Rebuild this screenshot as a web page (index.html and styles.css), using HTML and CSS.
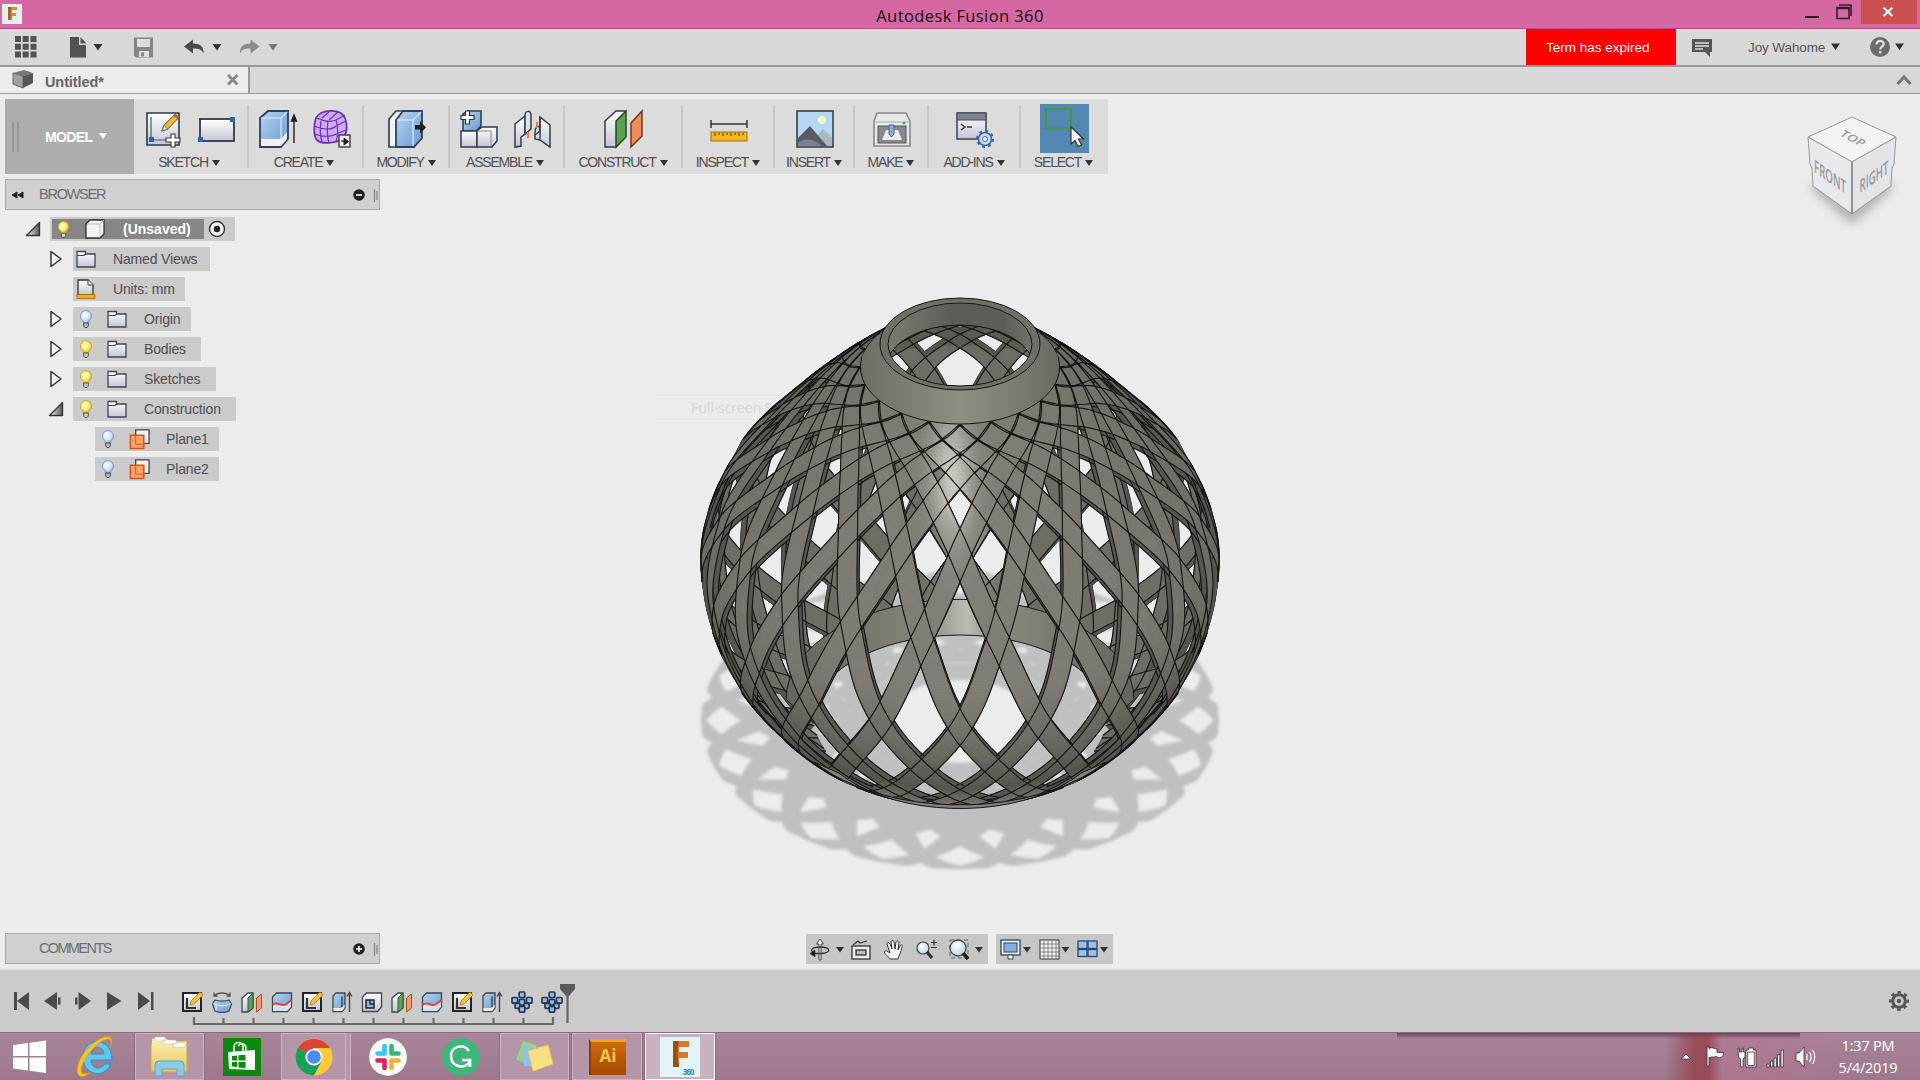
FILE: index.html
```html
<!DOCTYPE html>
<html lang="en">
<head>
<meta charset="utf-8">
<title>Autodesk Fusion 360</title>
<link rel="stylesheet" href="styles.css">
</head>
<body>
<svg class="defs" width="0" height="0">
  <defs>
    <linearGradient id="gBlue" x1="0" y1="0" x2="1" y2="1"><stop offset="0" stop-color="#b4d2f0"/><stop offset="1" stop-color="#6d9bd0"/></linearGradient>
    <linearGradient id="gSilver" x1="0" y1="0" x2="0" y2="1"><stop offset="0" stop-color="#fff"/><stop offset="1" stop-color="#c3c7d2"/></linearGradient>
    <linearGradient id="gTri" x1="0" y1="0" x2="1" y2="0"><stop offset="0" stop-color="#fff"/><stop offset="1" stop-color="#555"/></linearGradient>
    <linearGradient id="gFolder" x1="0" y1="0" x2="0" y2="1"><stop offset="0" stop-color="#fbf1b4"/><stop offset="1" stop-color="#e6c75c"/></linearGradient>
    <radialGradient id="gBulb" cx=".4" cy=".35" r=".7"><stop offset="0" stop-color="#fffde0"/><stop offset=".5" stop-color="#fdf07a"/><stop offset="1" stop-color="#d8b020"/></radialGradient>
    <radialGradient id="gBulbOff" cx=".4" cy=".35" r=".7"><stop offset="0" stop-color="#fff"/><stop offset=".6" stop-color="#cfe0fb"/><stop offset="1" stop-color="#8ba2cc"/></radialGradient>
    <radialGradient id="gLens" cx=".4" cy=".35" r=".7"><stop offset="0" stop-color="#fff"/><stop offset="1" stop-color="#b4d4dc"/></radialGradient>
  </defs>
  <symbol id="bulb" viewBox="0 0 16 20"><path d="M8 1.500a5.600 5.600 0 0 0-3 10.300L5.500 14h5l.5-2.200A5.600 5.600 0 0 0 8 1.500z" fill="url(#gBulb)" stroke="#c8a326"/><path d="M5.700 14h4.600v3l-1.300 1.500H7L5.700 17z" fill="#ccc" stroke="#555"/></symbol>
  <symbol id="bulb-off" viewBox="0 0 16 20"><path d="M8 1.500a5.600 5.600 0 0 0-3 10.300L5.500 14h5l.5-2.200A5.600 5.600 0 0 0 8 1.500z" fill="url(#gBulbOff)" stroke="#8798bb"/><path d="M5.700 14h4.600v3l-1.300 1.500H7L5.700 17z" fill="#bbb" stroke="#444"/></symbol>
  <symbol id="folder" viewBox="0 0 20 18"><path d="M1 1.500h8.500v2.500H19v13H1z" fill="url(#gSilver)" stroke="#3e4652" stroke-width="1.300"/><path d="M1 5.500h7l1.500-1.500" fill="none" stroke="#3e4652" stroke-width="1.200"/></symbol>
  <symbol id="plane" viewBox="0 0 22 22"><path d="M7 1h14v14H7z" fill="#f3f3f3" stroke="#3e4652" stroke-width="1.400"/><path d="M1.500 6.500h14v14h-14z" fill="#fba26a" stroke="#cc5a1c" stroke-width="1.600"/><path d="M7 7v9h8" fill="none" stroke="#cc5a1c"/></symbol>
  <symbol id="closed" viewBox="0 0 14 18"><path d="M2 1.500L12 9 2 16.500z" fill="#f6f6f6" stroke="#333" stroke-width="1.500" stroke-linejoin="round"/></symbol>
  <symbol id="open" viewBox="0 0 16 16"><path d="M14.500 1.500v13H1.500z" fill="url(#gTri)" stroke="#333" stroke-width="1.300" stroke-linejoin="round"/></symbol>
  <symbol id="pencil" viewBox="0 0 20 20"><path d="M1 19l2-6L15 1l4 3.500L7 17z" fill="#f6b92b" stroke="#5b4a26" stroke-width="1"/><path d="M1 19l2-6 4 4z" fill="#fff" stroke="#444" stroke-width=".8"/><path d="M13 3l4 3.500 2-2L15 1z" fill="#b46a3a"/></symbol>
  <symbol id="t-sketch" viewBox="0 0 22 22"><path d="M2 2h18v18H2z" fill="url(#gSilver)" stroke="#222" stroke-width="2"/><path d="M6 7v10h9" fill="none" stroke="#2d3640" stroke-width="2.200"/><path d="M9 14l1-4 9-9 3 3-9 9z" fill="#f7c02d" stroke="#a87817" stroke-width=".8"/></symbol>
  <symbol id="t-revolve" viewBox="0 0 22 22"><path d="M3 5c4-4 12-4 16 0M3 1.500V5h3.500M19 1.500V5h-3.500" fill="none" stroke="#555" stroke-width="1.300"/><path d="M4 9c5 1.500 9 1.500 14 0l2.500 4-2.500 7c-4 1.700-10 1.700-14 0L1.500 13z" fill="url(#gBlue)" stroke="#3b4d68" stroke-width="1.300"/><path d="M2.500 12.500c5 3 12 3 17 0M5 14v5.500" fill="none" stroke="#e8f2fc"/></symbol>
  <symbol id="t-plane" viewBox="0 0 22 22"><path d="M1 7l6-5h5v15l-5 4H1z" fill="url(#gSilver)" stroke="#3e4652" stroke-width="1.300"/><path d="M7 7l5-5v15l-5 4z" fill="#5da05a" stroke="#2f5a30"/><path d="M15.500 7L20.500 3v14l-5 4z" fill="#f39a68" stroke="#a5532a"/></symbol>
  <symbol id="t-split" viewBox="0 0 22 22"><path d="M1.500 6l4-4h15v14l-4 4.500h-15z" fill="url(#gBlue)" stroke="#3e4652" stroke-width="1.300"/><path d="M2 13h15l3-4v7l-4 4H2z" fill="#eef0f4" opacity=".8"/><path d="M1.500 14c5-5 8 3 14-1l5-4" fill="none" stroke="#e1413b" stroke-width="2"/></symbol>
  <symbol id="t-extrude" viewBox="0 0 22 22"><path d="M2 5l3-3h9v15l-3 3.500H2z" fill="url(#gBlue)" stroke="#3e4652" stroke-width="1.300"/><path d="M2.500 17H11l2.500-3.500V17L11 20H2.500z" fill="#eee"/><path d="M11 5.500V16M18.500 3v18M16 5.500L18.500 1.500 21 5.500" fill="none" stroke="#3e4652" stroke-width="1.400"/></symbol>
  <symbol id="t-shell" viewBox="0 0 22 22"><path d="M1.500 6l4-4h15v14l-4 4.500h-15z" fill="url(#gSilver)" stroke="#3e4652" stroke-width="1.300"/><path d="M5 9h8v8H5z" fill="#8db4e0" stroke="#222" stroke-width="1.500"/><path d="M9 9v4h4" fill="none" stroke="#222" stroke-width="1.300"/></symbol>
  <symbol id="t-pattern" viewBox="0 0 22 22"><g fill="#9bb9e2" stroke="#27364f" stroke-width="1.700"><rect x="8.200" y="1" width="5.600" height="5.600" rx="1"/><rect x="8.200" y="8.500" width="5.600" height="5.600" rx="1"/><rect x="1" y="6.500" width="5.600" height="5.600" rx="1"/><rect x="15.500" y="6.500" width="5.600" height="5.600" rx="1"/><rect x="4" y="12.300" width="5" height="5" rx="1"/><rect x="13" y="12.300" width="5" height="5" rx="1"/><rect x="8.200" y="15.500" width="5.600" height="5.600" rx="1"/></g></symbol>
</svg>
<div class="desktop">
  <header class="titlebar">
    <svg class="app-icon" width="20" height="20"><rect width="20" height="20" fill="#dff0f8"/><path d="M6 3h9v3h-5v3h4v3h-4v4H6z" fill="#e08a2a"/><path d="M6 3h3v13H6z" fill="#b45d14"/></svg>
    <h1>Autodesk Fusion 360</h1>
    <svg class="win-buttons" width="114" height="24"><path d="M0 17h14" stroke="#222" stroke-width="2"/><path d="M32 7.500h12v11H32zM32 8.500h12M34 5h12v11" fill="none" stroke="#33202b" stroke-width="1.600"/><rect x="56" width="56" height="24" fill="#c9504f"/><path d="M78.500 7.500l9 8.500M87.500 7.500l-9 8.500" stroke="#fff" stroke-width="2.200"/></svg>
  </header>

  <nav class="quickbar">
    <svg width="500" height="34"><g fill="#525252"><path d="M15 7h6v6h-6zM22.700 7h6v6h-6zM30.500 7h6v6h-6zM15 14.700h6v6h-6zM22.700 14.700h6v6h-6zM30.500 14.700h6v6h-6zM15 22.500h6v6h-6zM22.700 22.500h6v6h-6zM30.500 22.500h6v6h-6z"/><path d="M70 8h9v8h7v12.500H70zM80.500 8l6 6.500h-6z"/></g><path d="M93.500 15h9L98 21.500zM212.500 15h9l-4.500 6.500z" fill="#333"/><path d="M268.500 15h9l-4.500 6.500z" fill="#777"/><path d="M134 8.500h19v20h-17l-2-2z" fill="#858585"/><path d="M137 10h13v8h-13zM139 22h10v6h-10z" fill="#dcdcdc"/><path d="M141 23.500h3v4h-3z" fill="#858585"/><path d="M184 17.500l9-7v4c7 0 11 3 10.500 10-2-4-4-5-10.500-5v5z" fill="#4b4b4b"/><path d="M259.500 17.500l-9-7v4c-7 0-11 3-10.500 10 2-4 4-5 10.500-5v5z" fill="#8b8b8b"/></svg>
    <div class="quick-right">
      <span class="expired">Term has expired</span>
      <svg class="chat" width="22" height="20"><path d="M0 1h20v13h-2v5l-5-5H0z" fill="#555"/><path d="M3 5h14M3 8h14M3 11h8" stroke="#ddd" stroke-width="1.300"/></svg>
      <span class="user">Joy Wahome</span>
      <svg width="96" height="22"><path d="M7 7.500h9L11.500 14zM71 7.500h9L75.500 14z" fill="#333"/><circle cx="56" cy="11" r="10" fill="#6b6b6b"/><path d="M52.500 8.500c0-5 7.500-4.500 7.200-.3-.2 2.300-3.500 2.500-3.500 5.300M56.200 15v2.500" fill="none" stroke="#e2e2e2" stroke-width="2.300"/></svg>
    </div>
  </nav>

  <div class="tabs">
    <div class="tab">
      <svg width="22" height="22"><path d="M1 4l11-3 9 3-10 3z" fill="#777"/><path d="M1 4l10 3v12L1 15z" fill="#a2a2a2" stroke="#666"/><path d="M21 4L11 7v12l10-5z" fill="#555"/></svg>
      <span>Untitled*</span>
      <svg width="14" height="14"><path d="M2 2l9.500 9.500M11.500 2L2 11.500" stroke="#8a8a8a" stroke-width="3"/></svg>
    </div>
    <svg class="collapse" width="16" height="12"><path d="M1.500 10L8 3l6.500 7" fill="none" stroke="#777" stroke-width="3"/></svg>
  </div>

  <main class="workspace">
    <div class="ghost">Full-screen Snip</div>
    <canvas id="model" class="model" width="600" height="620"></canvas>

    <section class="ribbon">
      <div class="mode"><i class="grip"></i><span>MODEL</span><i class="caret light"></i></div>
      <div class="group w115"><div class="icons">
        <svg width="38" height="40"><path d="M3 4h32v32H3z" fill="url(#gSilver)" stroke="#2f3a48" stroke-width="1.600"/><path d="M7 8v23h19" fill="none" stroke="#3d5a86" stroke-width="1.200"/><rect x="5" y="28" width="5" height="5" fill="#2e62b8"/><use href="#pencil" x="17" y="4" width="19" height="19"/><path d="M27 25h4v4h5v4h-5v5h-4v-5h-5v-4h5z" fill="#fff" stroke="#333" stroke-width="1.100"/></svg>
        <svg width="40" height="40"><rect x="4" y="10" width="34" height="22" fill="url(#gSilver)" stroke="#2f3a48" stroke-width="1.800"/><rect x="34" y="8" width="5" height="5" fill="#2e62b8"/><rect x="2" y="28" width="5" height="5" fill="#2e62b8"/></svg>
      </div><b>SKETCH<i class="caret"></i></b></div>
      <div class="group w115"><div class="icons">
        <svg width="40" height="40"><path d="M2 9l8-7h20v28l-7 8H2z" fill="url(#gBlue)" stroke="#2f4058" stroke-width="1.800"/><path d="M3 30h20l6-7v7l-6 7H3z" fill="#eef0f2"/><path d="M3 9h20v21M23 9l6-6" fill="none" stroke="#c9e0f6" stroke-width="1.500"/><path d="M36 9v25M33.500 12L36 6l2.500 6z" stroke="#222" stroke-width="1.400"/></svg>
        <svg width="40" height="40"><path d="M4 9c5-9 25-10 29 0 3 8 2 14-1 19-4 6-22 8-27 3-4-4-3-17-1-22z" fill="#cfa9f8" stroke="#6a35a8" stroke-width="1.800"/><path d="M2 17c9 4 18 4 22 0l10-5M2 25c9 3 18 3 22 0l10-4M9 12c-1 7-1 15 1 21M16 12c-1 7-1 15 1 22M24 11c2 7 2 15 0 22M5 9c8 4 14 4 19 2l9-5M10 9l7-6M17 11l9-8" fill="none" stroke="#6a35a8" stroke-width="1.200"/><rect x="27" y="26" width="11" height="12" fill="#eee" stroke="#444" stroke-width="1.500"/><path d="M29 32h3v-3l4.500 3.500L32 36v-3" fill="#222" stroke="#222"/></svg>
      </div><b>CREATE<i class="caret"></i></b></div>
      <div class="group w86"><div class="icons">
        <svg width="40" height="40"><path d="M2 10l7-8h7v28l-7 8H2z" fill="#f2f3f5" stroke="#2f4058" stroke-width="1.700"/><path d="M9 11l7-9h19v27l-8 9H9z" fill="url(#gBlue)" stroke="#2f4058" stroke-width="1.800"/><path d="M10 11h16v26M26 11l8-8" fill="none" stroke="#c9e0f6" stroke-width="1.400"/><path d="M28 16h5v-4l6 6.500-6 6v-4h-5z" fill="#222"/></svg>
      </div><b>MODIFY<i class="caret"></i></b></div>
      <div class="group w115"><div class="icons">
        <svg width="40" height="40"><path d="M4 5l5-3h13v15l-5 5H4z" fill="url(#gBlue)" stroke="#2f4058" stroke-width="1.600"/><path d="M2 22h16v16H2z" fill="url(#gSilver)" stroke="#2f3a48" stroke-width="1.500"/><path d="M18 22l5-4h15v14l-5 6H18z" fill="url(#gSilver)" stroke="#2f3a48" stroke-width="1.500"/><path d="M18 22h14v15" fill="none" stroke="#888"/><path d="M6.500 2h4v4.500H15v4h-4.500V15h-4v-4.500H2v-4h4.500z" fill="#fff" stroke="#333" stroke-width="1.200"/></svg>
        <svg width="40" height="40"><path d="M2 15l10-8v18l-4 3v9l-6 1z" fill="url(#gSilver)" stroke="#343c48" stroke-width="1.500"/><path d="M12 7c0-6 6-6 6-1v14l-6 5z" fill="#dfe2e8" stroke="#343c48" stroke-width="1.500"/><path d="M37 16L27 8v14l-5 4v4l5 1 10 7z" fill="url(#gSilver)" stroke="#343c48" stroke-width="1.500"/><path d="M27 8v22M22 26c0-6 0-8 5-9" fill="none" stroke="#343c48" stroke-width="1.400"/><path d="M15 23v6M24 13v6" stroke="#ee7a33" stroke-width="2"/></svg>
      </div><b>ASSEMBLE<i class="caret"></i></b></div>
      <div class="group w118"><div class="icons">
        <svg width="42" height="40"><path d="M2 12L13 2h9v26l-9 10H2z" fill="url(#gSilver)" stroke="#2f3a48" stroke-width="1.500"/><path d="M13 12L23 2v26L13 38z" fill="#5aa251" stroke="#234a20" stroke-width="1.500"/><path d="M28 14L39 2v25L28 38z" fill="#f08b57" stroke="#6a3c22" stroke-width="1.500"/></svg>
      </div><b>CONSTRUCT<i class="caret"></i></b></div>
      <div class="group w92"><div class="icons">
        <svg width="40" height="40"><path d="M2 15h36M2 11v8M38 11v8" stroke="#333" stroke-width="1.500"/><rect x="2" y="23" width="36" height="9" fill="#f6b61c" stroke="#9a6f12"/><path d="M6 24v3M10 24v2M14 24v3M18 24v2M22 24v3M26 24v2M30 24v3M34 24v2" stroke="#6a4a0a" stroke-width="1.200"/></svg>
      </div><b>INSPECT<i class="caret"></i></b></div>
      <div class="group w80"><div class="icons">
        <svg width="40" height="40"><rect x="2" y="2" width="36" height="36" fill="#b5d9f4" stroke="#333" stroke-width="1.500"/><circle cx="27" cy="11" r="4" fill="#fbf6c2"/><path d="M18 31l10-11c5 4 7 6 9 9v8H18z" fill="#aeb6c0"/><path d="M3 29l12-12 17 20H3z" fill="#565a66"/><path d="M3 34c9-6 16-4 24 3H3z" fill="#7c8190"/></svg>
      </div><b>INSERT<i class="caret"></i></b></div>
      <div class="group w74"><div class="icons">
        <svg width="40" height="40"><path d="M5 4h29l4 8v25H2V12z" fill="#e8e9eb" stroke="#888" stroke-width="1.600"/><path d="M2 13h36" stroke="#aaa"/><rect x="6" y="17" width="28" height="17" fill="#85888d" stroke="#555"/><path d="M10 31l4-10h12l4 10z" fill="#e9eaec"/><path d="M17 16h5v9l-2.500 3-2.500-3z" fill="#8cabd4" stroke="#567"/><circle cx="32" cy="14" r="1.500" fill="#4caf50"/></svg>
      </div><b>MAKE<i class="caret"></i></b></div>
      <div class="group w92"><div class="icons">
        <svg width="42" height="40"><rect x="3" y="4" width="29" height="26" fill="url(#gSilver)" stroke="#444c58" stroke-width="1.600"/><path d="M3 4h29v7H3z" fill="#7d8490" stroke="#444c58"/><path d="M7 15l4 3-4 3M13 18h5" fill="none" stroke="#333" stroke-width="1.500"/><circle cx="31" cy="30" r="6.500" fill="#c8daf4" stroke="#41649c" stroke-width="1.600"/><circle cx="31" cy="30" r="8" fill="none" stroke="#41649c" stroke-width="2" stroke-dasharray="3 3.280"/><circle cx="31" cy="30" r="2.500" fill="#fff" stroke="#41649c"/></svg>
      </div><b>ADD-INS<i class="caret"></i></b></div>
      <div class="group w87"><div class="icons">
        <svg width="49" height="49"><rect width="49" height="49" fill="#5488b3"/><rect x="6" y="5" width="25" height="19" fill="none" stroke="#3d9c3f" stroke-width="2"/><path d="M31 23v17l4-3.500 3 6 3.500-1.800-3-5.700h5z" fill="#fff" stroke="#333" stroke-width="1.200"/></svg>
      </div><b>SELECT<i class="caret"></i></b></div>
    </section>

    <section class="panel">
      <svg width="15" height="10"><path d="M6 2v6L1 5zM12 2v6L7 5z" fill="#222" stroke="#222"/></svg>
      <h2>BROWSER</h2>
      <svg width="26" height="14"><circle cx="7" cy="7" r="5.800" fill="#222"/><path d="M4 7h6" stroke="#fff" stroke-width="1.600"/><path d="M22.500 1v13M25 3v9" stroke="#888" stroke-width="1.300"/></svg>
    </section>

    <ul class="tree">
      <li class="l0"><svg class="tw" width="16" height="16"><use href="#open"/></svg><div class="chip root"><div class="sel"><svg width="15" height="19"><use href="#bulb"/></svg><svg class="cube" width="22" height="20"><path d="M2 5l4-4h14v14l-4 4H2z" fill="#f3f3f5" stroke="#333" stroke-width="1.300"/><path d="M3 5h13v13M16 5l4-4" fill="none" stroke="#bbb"/></svg><span>(Unsaved)</span></div><svg width="18" height="18"><circle cx="9" cy="9" r="7.500" fill="#f4f4f4" stroke="#333" stroke-width="1.400"/><circle cx="9" cy="9" r="3.200" fill="#222"/></svg></div></li>
      <li class="l1"><svg class="tw" width="14" height="18"><use href="#closed"/></svg><div class="chip nv"><svg width="20" height="18"><use href="#folder"/></svg><span>Named Views</span></div></li>
      <li class="l1"><i class="tw"></i><div class="chip un"><svg width="20" height="20"><path d="M2 1h10l5 5v10H2z" fill="url(#gSilver)" stroke="#333" stroke-width="1.300"/><path d="M12 1v5h5" fill="#fff" stroke="#333"/><rect x="1" y="15.500" width="18" height="4" fill="#f3a91a" stroke="#a46c0a" stroke-width=".8"/></svg><span>Units: mm</span></div></li>
      <li class="l1"><svg class="tw" width="14" height="18"><use href="#closed"/></svg><div class="chip w118"><svg width="16" height="20"><use href="#bulb-off"/></svg><svg width="20" height="18"><use href="#folder"/></svg><span>Origin</span></div></li>
      <li class="l1"><svg class="tw" width="14" height="18"><use href="#closed"/></svg><div class="chip w128"><svg width="16" height="20"><use href="#bulb"/></svg><svg width="20" height="18"><use href="#folder"/></svg><span>Bodies</span></div></li>
      <li class="l1"><svg class="tw" width="14" height="18"><use href="#closed"/></svg><div class="chip w143"><svg width="16" height="20"><use href="#bulb"/></svg><svg width="20" height="18"><use href="#folder"/></svg><span>Sketches</span></div></li>
      <li class="l1"><svg class="tw" width="16" height="16"><use href="#open"/></svg><div class="chip w163"><svg width="16" height="20"><use href="#bulb"/></svg><svg width="20" height="18"><use href="#folder"/></svg><span>Construction</span></div></li>
      <li class="l2"><div class="chip w124"><svg width="16" height="20"><use href="#bulb-off"/></svg><svg width="21" height="21"><use href="#plane"/></svg><span>Plane1</span></div></li>
      <li class="l2"><div class="chip w124"><svg width="16" height="20"><use href="#bulb-off"/></svg><svg width="21" height="21"><use href="#plane"/></svg><span>Plane2</span></div></li>
    </ul>

    <svg class="viewcube" width="120" height="130">
      <defs><filter id="soft" x="-30%" y="-60%" width="160%" height="220%"><feGaussianBlur stdDeviation="5"/></filter></defs>
      <path d="M18 88l42 36 42-36-10-10H28z" fill="#999" opacity=".65" filter="url(#soft)"/>
      <path d="M60 16l44 20-44 25-44-25z" fill="#f3f3f5" stroke="#999"/>
      <path d="M16 36l44 25v52L21 85l-1-18-2-4z" fill="#e8e9ec" stroke="#999"/>
      <path d="M104 36L60 61v52l39-28 1-18 2-4z" fill="#e3e4e8" stroke="#999"/>
      <path d="M60 61v52" stroke="#888" stroke-width="1.500"/>
      <g font-family="Open Sans, sans-serif" font-weight="600" fill="#98989c" text-anchor="middle">
        <text transform="matrix(.76 .4 -.55 .5 58 40)" font-size="15">TOP</text>
        <text transform="matrix(.57 .4 0 1.050 38 82)" font-size="17">FRONT</text>
        <text transform="matrix(.57 -.4 0 1.050 82 82)" font-size="17">RIGHT</text>
      </g>
    </svg>

    <div class="bottom">
      <section class="panel comments">
        <h2>COMMENTS</h2>
        <svg width="26" height="14"><circle cx="7" cy="7" r="5.800" fill="#222"/><path d="M4 7h6M7 4v6" stroke="#fff" stroke-width="1.600"/><path d="M22.500 1v13M25 3v9" stroke="#888" stroke-width="1.300"/></svg>
      </section>
      <svg class="navbar" width="182" height="30">
        <g fill="none" stroke="#333" stroke-width="1.300"><path d="M13 26V10h-2.500L14 5l3.500 5H15v16z" fill="#fff" stroke-width=".9"/><path d="M9 19c-6-2-4-6 5-6 11 0 12 6 1 6.500H8"/><path d="M9 16v7l-5-3.500z" fill="#222" stroke-width=".6"/></g>
        <path d="M30 13h8l-4 5.500zM169 13h8l-4 5.500z" fill="#333"/>
        <g fill="#eee" stroke="#333" stroke-width="1.300"><rect x="46" y="12" width="18" height="13"/><rect x="50" y="16" width="10" height="5" fill="#bbb"/><path d="M47 11l5-4 2 2 7-2" fill="none"/></g>
        <path d="M84 25c-3-4-7-6-5-8 2-1 4 2 5 2l-3-9c0-2 2-2 3 0l2 5-1-7c0-2 3-2 3 0l1 7 1-7c1-2 3-1 3 0l-1 8 2-4c1-2 3-1 2 1-1 5-3 8-4 12z" fill="#fff" stroke="#333" stroke-width="1"/>
        <circle cx="117" cy="14" r="6" fill="url(#gLens)" stroke="#444" stroke-width="1.200"/><path d="M121 18l5 6" stroke="#333" stroke-width="3.300"/><path d="M125 8.500h6M128 5.500v6M125 13.500h6" stroke="#333" stroke-width="1.200"/>
        <rect x="144" y="6" width="18" height="18" fill="none" stroke="#666" stroke-dasharray="4 3"/><circle cx="152" cy="14" r="8" fill="url(#gLens)" stroke="#444" stroke-width="1.300"/><path d="M157 19l5 6" stroke="#222" stroke-width="3.800"/>
      </svg>
      <svg class="navbar second" width="117" height="30">
        <rect x="5" y="6" width="19" height="15" fill="#eee" stroke="#345" stroke-width="1.300"/><rect x="8" y="9" width="13" height="9" fill="#85aee0" stroke="#345"/><path d="M12 21h5v4h-5z" fill="#fff" stroke="#345"/><path d="M27 13h8l-4 5.500zM65.500 13h8l-4 5.500zM104 13h8l-4 5.500z" fill="#333"/>
        <rect x="44" y="6" width="19" height="19" fill="#f3f3f3" stroke="#333"/><path d="M48 6v19M52 6v19M56 6v19M60 6v19M44 10h19M44 14h19M44 18h19M44 22h19" stroke="#777" stroke-width=".9" fill="none"/>
        <g fill="#9dc0ec" stroke="#2c456c" stroke-width="1.300"><rect x="82" y="7" width="9" height="7.500"/><rect x="92" y="7" width="9" height="7.500"/><rect x="82" y="15.500" width="9" height="7"/><rect x="92" y="15.500" width="9" height="7"/></g>
      </svg>
    </div>
  </main>

  <section class="timeline">
    <svg class="playback" width="150" height="20"><g fill="#4a4a4a"><path d="M1 1h3v18H1zM16 1v18L4 10zM44 1v18L31 10zM45 6.500h2.500v7H45zM62 6.500h2.500v7H62zM65.500 1v18L78 10zM94 1v18l14.500-9zM125 1v18l12-9zM138 1h2.500v18H138z"/></g></svg>
    <div class="track">
      <div class="features">
        <svg><use href="#t-sketch"/></svg><svg><use href="#t-revolve"/></svg><svg><use href="#t-plane"/></svg><svg><use href="#t-split"/></svg><svg><use href="#t-sketch"/></svg><svg><use href="#t-extrude"/></svg><svg><use href="#t-shell"/></svg><svg><use href="#t-plane"/></svg><svg><use href="#t-split"/></svg><svg><use href="#t-sketch"/></svg><svg><use href="#t-extrude"/></svg><svg><use href="#t-pattern"/></svg><svg><use href="#t-pattern"/></svg>
      </div>
      <svg class="rail" width="364" height="9"><path d="M2 0v7h359V0M31.500 7V1M61.500 7V1M91.500 7V1M121.500 7V1M151.500 7V1M181.500 7V1M211.500 7V1M241.500 7V1M271.500 7V1M301.500 7V1M331.500 7V1" fill="none" stroke="#6a6a6a" stroke-width="2.200"/></svg>
      <svg class="marker" width="16" height="41"><path d="M0 1h15v5l-6 7h-3L0 6z" fill="#5a5a5a"/><path d="M7.500 10v30" stroke="#666" stroke-width="2.200"/></svg>
    </div>
    <svg class="gear" width="22" height="22"><circle cx="11" cy="11" r="6.300" fill="none" stroke="#555" stroke-width="3"/><circle cx="11" cy="11" r="8.700" fill="none" stroke="#555" stroke-width="2.600" stroke-dasharray="3.400 3.430" stroke-dashoffset="1.700"/><circle cx="11" cy="11" r="2.200" fill="#555"/></svg>
  </section>

  <footer class="taskbar">
    <div class="task start"><svg width="34" height="34"><path d="M0 5l15-2v13H0zM16.500 2.800L33 .5V16H16.500zM0 17.500h15v13l-15-2zM16.500 17.500H33V33l-16.500-2.300z" fill="#fff"/></svg></div>
    <div class="task ie"><svg width="40" height="44"><path d="M35 29c-6 15-28 12-28-7C7 2 36 0 36 25H15c1 10 11 10 13 4zM15 19h13c-1-9-12-9-13 0z" fill="#5bc8f0" stroke="#2d93cc" fill-rule="evenodd"/><path d="M34 13C39 2 33-1 24 4 10 11-2 30 2 39c2 5 8 2 13-2-6 3-10 2-10-2C6 24 22 5 32 4c4 0 3 5 2 9z" fill="#fbc41c" stroke="#d9960d" stroke-width=".6"/></svg></div>
    <div class="task framed explorer"><svg width="42" height="42"><path d="M3 2h14l3 3h18v31H2V10z" fill="url(#gFolder)" stroke="#c9a84a"/><path d="M6 1h10v4H6zM14 4h13v4H14zM24 7h12v4H24z" fill="#fff" stroke="#bbb" stroke-width=".5"/><path d="M6 40V29q0-4 4-4h21q4 0 4 4v11h-7v-7H13v7z" fill="#8ccbe8" stroke="#5aa8d0"/></svg></div>
    <div class="task store"><svg width="38" height="38"><rect width="38" height="38" fill="#0b8a0b"/><path d="M5 14l27-2v20L6 31z" fill="#fff"/><path d="M11 16V9c0-6 9-6 9 0v6M15 8c3-4 8-2 8 2v4" fill="none" stroke="#fff" stroke-width="1.500"/><path d="M9 18l5-.5v5H9zM15.500 17.300l7-.5v5.700h-7zM9 24h5v5l-5-.500zM15.500 24h7v6l-7-.600z" fill="#0b8a0b"/></svg></div>
    <div class="task framed chrome"><svg width="38" height="38"><circle cx="19" cy="19" r="18.500" fill="#fdc93a"/><path d="M19 19L3 10A18.500 18.500 0 0 1 35 10H19z" fill="#dc4437"/><path d="M19 19L3 9.800A18.500 18.500 0 0 0 19 37.500L27 23z" fill="#1a9f58"/><path d="M35 10a18.500 18.500 0 0 1-16 27.500L27 23l-2-13z" fill="#fdc93a"/><circle cx="19" cy="19" r="8.600" fill="#fff"/><circle cx="19" cy="19" r="6.800" fill="#4a8af4"/></svg></div>
    <div class="task slack"><svg width="38" height="38"><circle cx="19" cy="19" r="18.800" fill="#fff"/><g stroke-width="4.600" stroke-linecap="round"><path d="M15.500 8v7M8.500 15.500h7" stroke="#36c5f0"/><path d="M22.500 8v7M22.500 15.500h7" stroke="#2eb67d"/><path d="M15.500 23v7M8.500 22.500h7" stroke="#e01e5a"/><path d="M22.500 23v7M22.500 22.500h7" stroke="#ecb22e"/></g></svg></div>
    <div class="task gram"><svg width="38" height="38"><circle cx="19" cy="19" r="18.800" fill="#3bb877"/><path d="M27 13c-6-9-19-4-18 6 1 12 18 12 19 3h-8M28 21v8" fill="none" stroke="#fff" stroke-width="2.600"/></svg></div>
    <div class="task framed notes"><svg width="38" height="36"><path d="M8 2l14 4-7 19-14-4z" fill="#8fd68a"/><path d="M9 8h16v19H9z" fill="#8fc0f2"/><path d="M13 12l20-6 5 19-20 7z" fill="#fbe083" stroke="#e9c958"/></svg></div>
    <div class="task framed ai"><div class="ai-tile">Ai</div></div>
    <div class="task framed active fusion"><svg width="40" height="40"><rect width="40" height="40" fill="#e2f3fa"/><path d="M13 4h16v6H19v5h9v6h-9v9h-6z" fill="#d5792c"/><path d="M13 4h6c-2 8-2 17 0 26h-6z" fill="#9c4d12"/><text x="22.500" y="37.500" font-family="Liberation Sans" font-size="8.500" font-weight="bold" fill="#1a8bd0" textLength="12">360</text></svg></div>
    <div class="tray">
      <svg width="150" height="26"><g fill="#fff" stroke="#3a2a33" stroke-width=".8"><path d="M1 15l5-5 5 5z"/><path d="M27 3h2v1.500c4-2 5 1 8 0v4h7c-1 6-5 6-8 4-2 1-4 0-7 1V22h-2z"/><path d="M66 6h2.500V4h5v2H76v17H66z"/><path d="M58 4h1.500v4H62V4h1.500v4H65v5l-2 2v8h-2.500v-8l-2-2z"/><path d="M87 20h2.300v3H87zM90.500 17h2.300v6h-2.300zM94 14h2.300v9H94zM97.500 10.500h2.300V23h-2.300zM101 6h2.300v17H101z"/><path d="M116 9h3l5-6v20l-5-6h-3z"/></g><path d="M67.700 8h6.600v13.500h-6.600z" fill="none" stroke="#3a2a33" stroke-width=".8"/><path d="M127 10v6M129.500 8c2 3 2 7 0 10M132.500 6c3 4 3 10 0 14" fill="none" stroke="#fff" stroke-width="1.200"/></svg>
      <div class="clock"><span>1:37 PM</span><span>5/4/2019</span></div>
    </div>
  </footer>
</div>
<script src="model.js"></script>
</body>
</html>
```
FILE: styles.css
```css
* { box-sizing: border-box; }
body { margin: 0; width: 1920px; height: 1080px; overflow: hidden; font-family: "Liberation Sans", Arial, sans-serif; font-size: 14px; color: #555; }
svg { display: block; flex: none; }
h1, h2, ul { margin: 0; padding: 0; font-weight: normal; }
.defs { position: absolute; }
.desktop { display: flex; flex-direction: column; height: 1080px; background: #ececec; }

.titlebar { display: grid; grid-template-columns: 1fr auto 1fr; align-items: start; height: 29px; background: #d568a3; border-bottom: 1px solid #b3508a; }
.app-icon { margin: 4px 0 0 2px; }
.titlebar h1 { font: 16.500px/32px "Open Sans", "Noto Sans", sans-serif; height: 28px; color: #1c1016; letter-spacing: .4px; }
.win-buttons { justify-self: end; margin-right: 1px; }

.quickbar { display: flex; justify-content: space-between; height: 36px; background: #d8d8d8; }
.quick-right { display: flex; align-items: center; width: 394px; height: 36px; }
.expired { display: flex; align-items: center; width: 150px; height: 36px; padding-left: 20px; background: #f00; color: #fff; font-size: 13.500px; }
.chat { margin: 2px 34px 0 16px; }
.user { width: 76px; font-size: 13.500px; letter-spacing: -.1px; white-space: nowrap; }

.tabs { display: flex; justify-content: space-between; align-items: center; height: 29px; background: #d8d8d8; border-top: 2px solid #999; border-bottom: 1px solid #999; padding-right: 8px; }
.tab { display: flex; align-items: center; width: 250px; height: 26px; padding: 0 8px 0 12px; background: #ececec; border-right: 2px solid #999; }
.tab span { flex: 1; padding: 4px 0 0 11px; font-weight: bold; font-size: 14.500px; letter-spacing: -.1px; color: #666; }

.workspace { position: relative; display: flex; flex-direction: column; align-items: flex-start; height: 876px; padding: 5px 5px 0; border-bottom: 1px solid #ddd; }
.model { position: absolute; left: 660px; top: 176px; }
.ghost { position: absolute; left: 657px; top: 301px; width: 150px; height: 25px; padding-left: 34px; border: 1px solid #e4e4e6; border-left: 0; font: 14.500px/24px "Open Sans", sans-serif; letter-spacing: -.3px; color: #d6d6d8; }
.viewcube { position: absolute; left: 1792px; top: 7px; }

.ribbon { display: flex; height: 75px; background: #dcdcdc; margin-bottom: 5px; }
.mode { display: flex; align-items: center; width: 129px; padding: 1px 0 0 7px; background: #adadad; color: #fff; font-weight: bold; font-size: 14px; letter-spacing: -.6px; }
.grip { width: 7px; height: 30px; border: solid #969696; border-width: 0 2px; margin-right: 26px; }
.caret { display: inline-block; border: solid transparent; border-width: 6px 4px 0; border-top-color: #333; margin-left: 4px; }
.caret.light { border-top-color: #fff; margin: -2px 0 0 6px; }
.group { position: relative; display: flex; flex-direction: column; align-items: center; }
.group + .group::before { content: ""; position: absolute; left: -2px; top: 6px; width: 2px; height: 63px; background: #c8c8c8; }
.icons { display: flex; justify-content: center; align-items: center; gap: 14px; height: 49px; margin-top: 5px; }
.group b { display: flex; align-items: center; margin-left: -2px; font-weight: normal; font-size: 14px; line-height: 19px; letter-spacing: -1.200px; color: #505050; }
.w115 { width: 115px; } .w86 { width: 86px; } .w118 { width: 118px; } .w92 { width: 92px; }
.w80 { width: 80px; } .w74 { width: 74px; } .w87 { width: 87px; }
.group.w115 { padding-right: 3px; }

.panel { display: flex; align-items: center; width: 375px; height: 31px; padding: 0 1px 0 5px; background: #d0d0d0; border: 1px solid #aaa; }
.panel h2 { flex: 1; margin: -2px 0 0 13px; font-size: 14.500px; letter-spacing: -1.250px; color: #6e6e6e; }
.panel.comments h2 { margin: -1px 0 0 28px; letter-spacing: -1.600px; }

.tree { list-style: none; margin-top: 7px; }
.tree li { display: flex; align-items: center; height: 24px; margin-bottom: 6px; }
.tw { width: 16px; margin-right: 9px; }
.l0 { padding-left: 20px; }
.l1 { padding-left: 43px; }
.l2 { padding-left: 90px; }
.chip { display: flex; align-items: center; height: 24px; padding-left: 3px; background: #cbcbcb; }
.chip span { letter-spacing: -.15px; font-size: 14px; white-space: nowrap; color: #4e4e4e; margin-left: 17px; }
.chip svg + svg { margin-left: 13px; }
.chip.nv { width: 137px; } .chip.un { width: 112px; }
.chip.w118, .chip.w128, .chip.w143, .chip.w163 { padding-left: 5px; }
.w118 { width: 118px; } .w128 { width: 128px; } .w143 { width: 143px; } .w163 { width: 163px; }
.chip.w124 { padding-left: 5px; width: 124px; }
.w124 span { margin-left: 16px; }
.chip.root { width: 185px; padding-left: 2px; }
.sel { display: flex; align-items: center; width: 152px; height: 20px; padding-left: 4px; background: #868686; margin-right: 4px; }
.chip .sel span { color: #fff; font-weight: bold; margin-left: 17px; letter-spacing: 0; }
.group.w118 { width: 118px; }

.bottom { display: flex; align-items: flex-start; height: 35px; margin-top: auto; }
.panel.comments { margin-top: -1px; }
.navbar { background: #c6c6c6; margin-left: 426px; }
.navbar.second { margin-left: 8px; }

.timeline { display: flex; height: 62px; background: #cbcbcb; padding: 0 10px 0 13px; }
.playback { margin-top: 21px; }
.track { position: relative; width: 420px; margin-left: 18px; padding-top: 21px; }
.features { display: flex; gap: 8px; }
.features svg { width: 22px; height: 22px; }
.rail { margin: 4px 0 0 11px; }
.marker { position: absolute; left: 379px; top: 13px; }
.gear { margin: 20px 0 0 auto; }

.taskbar { display: flex; align-items: stretch; height: 48px; border-top: 1px solid #8a6a7d; background:
  linear-gradient(#6d4358, #6d435800) 1397px 0 / 403px 6px no-repeat,
  linear-gradient(90deg, #96404c00 1665px, #96404cd0 1695px, #96404cd0 1708px, #b5759090 1722px, #b5759070 1790px, #b5759000 1850px),
  linear-gradient(#a9859a, #9c788c); }
.task { display: flex; align-items: center; justify-content: center; }
.framed { border: 1px solid #cdb3c2; background: #b596a8; box-shadow: 0 0 0 1px #8d6a7e; }
.active { border: 1px solid #fff; background: #c9b2bf; }
.start { width: 60px; }
.ie { width: 75px; padding-right: 3px; }
.explorer { width: 69px; }
.store { width: 77px; padding-right: 1px; }
.chrome { width: 65px; box-shadow: 4px 0 0 #b596a8, 5px 0 0 #cdb3c2; }
.slack { width: 84px; }
.gram { width: 62px; margin-right: 8px; }
.notes { width: 69px; padding-right: 2px; }
.ai { width: 70px; margin: 0 3px; }
.fusion { width: 70px; }
.ai-tile { width: 37px; height: 36px; background: linear-gradient(#cc6a0c, #a34a04); border-top: 3px solid #f7a21f; border-left: 2px solid #8a3b04; color: #fdc63f; font: bold 17px/28px "Open Sans", sans-serif; text-align: center; }
.tray { display: flex; align-items: center; margin-left: auto; width: 240px; }
.clock { flex: 1; display: flex; flex-direction: column; margin-right: 14px; text-align: center; font: 14.500px/22px "Open Sans", "Noto Sans", sans-serif; letter-spacing: -.2px; color: #fff; }
```
FILE: model.js
```js
// Draws the woven lamp shade: two opposed families of ribbons on a surface of revolution.
const ctx = document.getElementById('model').getContext('2d');
const CX = 300, CY = 293, SIN = 0.575, COS = 0.82, WIDTH = 21.6, COUNT = 20, STRIPS = 6, THICK = 6;
const RAD = Math.PI / 180;

// Monotone cubic interpolation through [x, y] knots.
function curve(pts) {
  const n = pts.length, d = [], m = [];
  for (let i = 0; i < n - 1; i++) d.push((pts[i + 1][1] - pts[i][1]) / (pts[i + 1][0] - pts[i][0]));
  for (let i = 0; i < n; i++) {
    if (i === 0) m.push(d[0]);
    else if (i === n - 1) m.push(d[n - 2]);
    else m.push(d[i - 1] * d[i] <= 0 ? 0 : 2 * d[i - 1] * d[i] / (d[i - 1] + d[i]));
  }
  return x => {
    let i = 0;
    while (i < n - 2 && x > pts[i + 1][0]) i++;
    const w = pts[i + 1][0] - pts[i][0], t = (x - pts[i][0]) / w, u = 1 - t;
    return pts[i][1] * (1 + 2 * t) * u * u + m[i] * w * t * u * u +
      pts[i + 1][1] * t * t * (3 - 2 * t) - m[i + 1] * w * t * t * u;
  };
}
const radius = curve([[-193, 150], [-170, 180], [-139, 207], [-88, 239], [-30, 256], [5, 259], [75, 241], [144, 191], [183, 157], [205, 136], [228, 112], [239, 100]]);
const twist = curve([[-193, -35], [-170, -27], [-139, -18], [-88, -9], [-22, 0], [75, 9], [144, 18], [183, 27], [205, 36], [218, 45], [228, 54], [239, 63]]);

const STEPS = 150, rows = [];
for (let i = 0; i <= STEPS; i++) {
  const h = -193 + 432 * i / STEPS, e = 4;
  const lo = Math.max(-193, h - e), hi = Math.min(239, h + e);
  const dr = (radius(hi) - radius(lo)) / (hi - lo);
  const df = (twist(hi) - twist(lo)) / (hi - lo) * RAD;
  const r = radius(h), across = r * df / Math.hypot(1, dr);
  rows.push({ h, r, dr, f: twist(h) * RAD, half: WIDTH / 2 / r * Math.hypot(1, across) });
}

function point(row, a, inset) {
  const k = Math.hypot(1, row.dr), r = row.r - inset / k, h = row.h + inset * row.dr / k;
  return { x: CX + r * Math.sin(a), y: CY - h * COS + r * Math.cos(a) * SIN };
}
function facing(row, a) {
  return (-row.dr * SIN + Math.cos(a) * COS) / Math.hypot(1, row.dr);
}
function tone(row, a, front, p) {
  let v;
  if (front) {
    v = 104 + 24 * Math.max(0, facing(row, a));
    if (row.h < 10) v -= Math.min(26, (10 - row.h) * 0.2);
    if (row.h < -120) v += (-120 - row.h) * 0.8;
    v += 74 * Math.exp(-((p.x - 293) ** 2) / 400 - ((p.y - 210) ** 2) / 3600);
  } else {
    v = row.h > 130 ? 92 : 110;
    v += 60 * Math.exp(-((p.x - 303) ** 2) / 500) * (row.h < 0 ? 1 : 0);
  }
  return `rgb(${v + 1 | 0},${v - 1 | 0},${v - 8 | 0})`;
}
function quad(a, b, c, d) {
  ctx.beginPath();
  ctx.moveTo(a.x, a.y); ctx.lineTo(b.x, b.y); ctx.lineTo(c.x, c.y); ctx.lineTo(d.x, d.y);
  ctx.closePath();
}

const ribbons = [];
for (const dir of [1, -1]) for (let k = 0; k < COUNT; k++) ribbons.push({ dir, base: k * 2 * Math.PI / COUNT });

// Calls draw for every ribbon piece; s is the position across the ribbon, -1 to 1.
function pieces(front, stops, draw) {
  for (const rb of ribbons) for (let i = 0; i < STEPS; i++) {
    const p = rows[i], q = rows[i + 1];
    const a = rb.base + rb.dir * p.f, b = rb.base + rb.dir * q.f;
    for (const s of stops) if ((facing(p, a + s * p.half) > 0) === front) draw(p, q, a, b, s);
  }
}
const centres = Array.from({ length: STRIPS }, (_, i) => -1 + (2 * i + 1) / STRIPS);

function outline(front, inset) {
  ctx.strokeStyle = '#151412'; ctx.lineWidth = 1.15;
  ctx.beginPath();
  pieces(front, [-1, 1], (p, q, a, b, s) => {
    const u = point(p, a + s * p.half, inset), v = point(q, b + s * q.half, inset);
    ctx.moveTo(u.x, u.y); ctx.lineTo(v.x, v.y);
  });
  ctx.stroke();
}
function skin(front, inset) {
  const w = 1 / STRIPS;
  pieces(front, centres, (p, q, a, b, s) => {
    const m = point(p, a + s * p.half, inset);
    quad(point(p, a + (s - w) * p.half, inset), point(q, b + (s - w) * q.half, inset),
      point(q, b + (s + w) * q.half, inset), point(p, a + (s + w) * p.half, inset));
    ctx.fillStyle = ctx.strokeStyle = tone(p, a, front, m);
    ctx.lineWidth = 0.7; ctx.fill(); ctx.stroke();
  });
  outline(front, inset);
}
function walls(front) {
  pieces(front, [-1, 1], (p, q, a, b, s) => {
    quad(point(p, a + s * p.half, 0), point(q, b + s * q.half, 0),
      point(q, b + s * q.half, THICK), point(p, a + s * p.half, THICK));
    ctx.fillStyle = ctx.strokeStyle = '#56554f'; ctx.lineWidth = 0.5; ctx.fill(); ctx.stroke();
  });
}
// Limb of the surface, drawn only where a ribbon reaches it.
function limb() {
  ctx.strokeStyle = '#151412'; ctx.lineWidth = 1.6;
  ctx.beginPath();
  for (let i = 0; i < STEPS; i++) {
    const p = rows[i], q = rows[i + 1];
    const cp = p.dr * SIN / COS, cq = q.dr * SIN / COS;
    if (Math.abs(cp) > 1 || Math.abs(cq) > 1) continue;
    for (const side of [1, -1]) {
      const a = side * Math.acos(cp), b = side * Math.acos(cq);
      const covered = ribbons.some(rb => {
        const t = a - rb.base - rb.dir * p.f;
        return Math.abs(Math.atan2(Math.sin(t), Math.cos(t))) < p.half;
      });
      if (!covered) continue;
      const u = point(p, a, 0), v = point(q, b, 0);
      ctx.moveTo(u.x, u.y); ctx.lineTo(v.x, v.y);
    }
  }
  ctx.stroke();
}
function ring(y, r, ry = r * SIN) { ctx.ellipse(CX, y, r, ry, 0, 0, 2 * Math.PI); }

// Shadow cast straight down onto the ground plane.
ctx.save();
ctx.filter = 'blur(1.5px)';
ctx.fillStyle = '#c0c0c0';
const ground = CY + 193 * COS;
ctx.beginPath();
for (const rb of ribbons) for (let i = 0; i < STEPS; i++) {
  const p = rows[i], q = rows[i + 1];
  const a = rb.base + rb.dir * p.f, b = rb.base + rb.dir * q.f;
  const flat = (row, t) => [CX + row.r * Math.sin(t), ground - 1 + row.r * Math.cos(t) * SIN];
  const c = [flat(p, a - p.half), flat(q, b - q.half), flat(q, b + q.half), flat(p, a + p.half)];
  let area = 0;
  c.forEach((v, j) => { const w = c[(j + 1) % 4]; area += v[0] * w[1] - w[0] * v[1]; });
  if (area < 0) c.reverse();
  c.forEach((v, j) => j ? ctx.lineTo(v[0], v[1]) : ctx.moveTo(v[0], v[1]));
  ctx.closePath();
}
ctx.fill();
ctx.beginPath(); ring(ground, 180); ctx.closePath(); ctx.moveTo(CX + 148, ground); ring(ground, 148); ctx.fill('evenodd');
ctx.beginPath(); ring(ground, 102); ctx.closePath(); ctx.moveTo(CX + 72, ground); ring(ground, 72); ctx.fill('evenodd');
ctx.restore();

// Far half: outer skin, cut edges, then the inner skin that faces the viewer.
skin(false, 0);
walls(false);
skin(false, THICK);

// Bottom ring, far side seen from inside.
const top2 = CY + 170 * COS, low2 = ground;
ctx.beginPath();
ctx.ellipse(CX, top2 - 3, 174, 174 * SIN, 0, Math.PI, 2 * Math.PI);
ctx.ellipse(CX, low2, 150, 150 * SIN, 0, 2 * Math.PI, Math.PI, true);
ctx.closePath();
let g = ctx.createLinearGradient(130, 0, 470, 0);
g.addColorStop(0, '#65645e'); g.addColorStop(0.38, '#86837a'); g.addColorStop(0.52, '#bcbab3'); g.addColorStop(0.62, '#8b887f'); g.addColorStop(1, '#65645e');
ctx.fillStyle = g; ctx.fill(); ctx.strokeStyle = '#1d1c1a'; ctx.lineWidth = 1; ctx.stroke();

// Near half.
walls(true);
outline(true, THICK);
skin(true, 0);
limb();

// Bottom ring, near lip.
ctx.lineWidth = 1;
ctx.beginPath();
ctx.ellipse(CX, top2 - 1, 180, 180 * SIN, 0, 0.2 * Math.PI, 0.8 * Math.PI);
ctx.ellipse(CX, low2 + 1, 150, 150 * SIN, 0, 0.8 * Math.PI, 0.2 * Math.PI, true);
ctx.closePath();
ctx.fillStyle = '#85837a'; ctx.fill(); ctx.stroke();

// Collar.
const hole = 74.5, lip = 74;
g = ctx.createLinearGradient(200, 0, 400, 0);
g.addColorStop(0, '#6d6c65'); g.addColorStop(0.2, '#7c7a72'); g.addColorStop(0.5, '#918e84'); g.addColorStop(0.8, '#7c7a72'); g.addColorStop(1, '#686761');
ctx.save();
ctx.beginPath(); ctx.rect(0, 0, 600, 620); ctx.moveTo(CX + 72, hole); ring(hole, 72, 41.5); ctx.clip('evenodd');
ctx.fillStyle = g;
ctx.beginPath(); ring(97, 99.6, 57); ctx.fill(); ctx.stroke();
ctx.beginPath(); ctx.moveTo(222, 64); ctx.lineTo(202, 85); ctx.lineTo(206, 115); ctx.lineTo(394, 115); ctx.lineTo(398, 85); ctx.lineTo(378, 64); ctx.fill();
ctx.fillStyle = '#716f68';
ctx.beginPath(); ring(lip, 80, 46); ctx.fill(); ctx.stroke();
ctx.restore();
ctx.save();
ctx.beginPath(); ring(hole, 72, 41.5); ctx.clip();
ctx.beginPath(); ctx.rect(200, 0, 200, 130); ctx.moveTo(CX + 74, 98); ring(98, 74, 43);
g = ctx.createLinearGradient(228, 0, 372, 0);
g.addColorStop(0, '#7b7a72'); g.addColorStop(0.45, '#5d5d58'); g.addColorStop(0.8, '#5d5d58'); g.addColorStop(1, '#73716b');
ctx.fillStyle = g; ctx.fill('evenodd');
ctx.beginPath(); ring(98, 74, 43); ctx.stroke();
ctx.restore();
ctx.beginPath(); ring(hole, 72, 41.5); ctx.stroke();
```
